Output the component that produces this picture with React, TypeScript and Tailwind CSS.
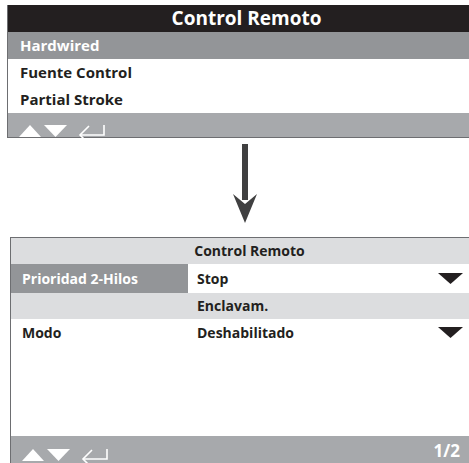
import React from "react";

const font = { fontFamily: '"Open Sans", "Noto Sans", sans-serif' };

function Nav() {
  return (
    <div className="flex items-center">
      <svg width="22" height="12" viewBox="0 0 22 12" className="block">
        <polygon points="0,12 11,0 22,12" fill="#ffffff" />
      </svg>
      <svg width="23" height="12" viewBox="0 0 23 12" className="ml-[3px] block">
        <polygon points="0,0 23,0 11.5,12" fill="#ffffff" />
      </svg>
      <svg width="28" height="22" viewBox="0 0 28 22" className="ml-[11px] mt-[8px] block">
        <polyline points="26,1 26,11 2,11" fill="none" stroke="#ffffff" strokeWidth="1.6" />
        <polyline points="11,2 2,11 11,20" fill="none" stroke="#ffffff" strokeWidth="1.6" />
      </svg>
    </div>
  );
}

function Drop() {
  return (
    <svg width="25" height="11" viewBox="0 0 25 11" className="block">
      <polygon points="0,0 25,0 12.5,11" fill="#231f20" />
    </svg>
  );
}

export default function App() {
  return (
    <div className="w-[469px] h-[463px] overflow-hidden bg-white font-bold" style={font}>
      {/* Top panel */}
      <div className="ml-[7px] mt-[5px] w-[478px] border-l-[1.5px] border-b-[1.5px] border-[#6d6e71]">
        <div className="h-[27px] bg-[#231f20] text-white text-[19px] flex items-center justify-center leading-none">
          Control Remoto
        </div>
        <div className="h-[27px] bg-[#939598] text-white text-[15px] flex items-center pl-[12px] leading-none">
          Hardwired
        </div>
        <div className="h-[27px] text-[#231f20] text-[15px] flex items-center pl-[12px] leading-none">
          Fuente Control
        </div>
        <div className="h-[27px] text-[#231f20] text-[15px] flex items-center pl-[12px] leading-none">
          Partial Stroke
        </div>
        <div className="h-[24px] bg-[#a7a9ac] pl-[11px] flex items-start pt-[3px]">
          <Nav />
        </div>
      </div>

      {/* Arrow */}
      <svg width="24" height="80" viewBox="0 0 24 80" className="block ml-[233px] mt-[6px]">
        <rect x="9" y="0" width="6" height="56" fill="#404041" />
        <polygon points="0,50 12,60 24,50 12,79" fill="#404041" />
      </svg>

      {/* Bottom panel */}
      <div className="ml-[10px] mt-[13px] w-[478px] border-l-[1.5px] border-t-[1.5px] border-[#6d6e71]">
        <div className="h-[26px] bg-[#dcdddf] text-[#231f20] text-[14px] flex items-center justify-center leading-none">
          Control Remoto
        </div>
        <div className="h-[29px] flex text-[14px] leading-none">
          <div className="w-[177px] bg-[#939598] text-white flex items-center pl-[11px]">Prioridad 2-Hilos</div>
          <div className="flex-1 flex items-center justify-between pl-[9px] pr-[25px] text-[#231f20]">
            <span>Stop</span>
            <Drop />
          </div>
        </div>
        <div className="h-[26px] flex text-[14px] leading-none bg-[#dcdddf]">
          <div className="w-[177px]"></div>
          <div className="flex-1 flex items-center pl-[9px] text-[#231f20]">Enclavam.</div>
        </div>
        <div className="h-[27px] flex text-[14px] leading-none text-[#231f20]">
          <div className="w-[177px] flex items-center pl-[11px]">Modo</div>
          <div className="flex-1 flex items-center justify-between pl-[9px] pr-[25px]">
            <span>Deshabilitado</span>
            <Drop />
          </div>
        </div>
        <div className="h-[90px]"></div>
        <div className="h-[30px] bg-[#a7a9ac] flex items-start justify-between pl-[11px] pr-[28px] pt-[4px]">
          <Nav />
          <span className="text-white text-[17px] leading-none mt-[2px]">1/2</span>
        </div>
      </div>
    </div>
  );
}
